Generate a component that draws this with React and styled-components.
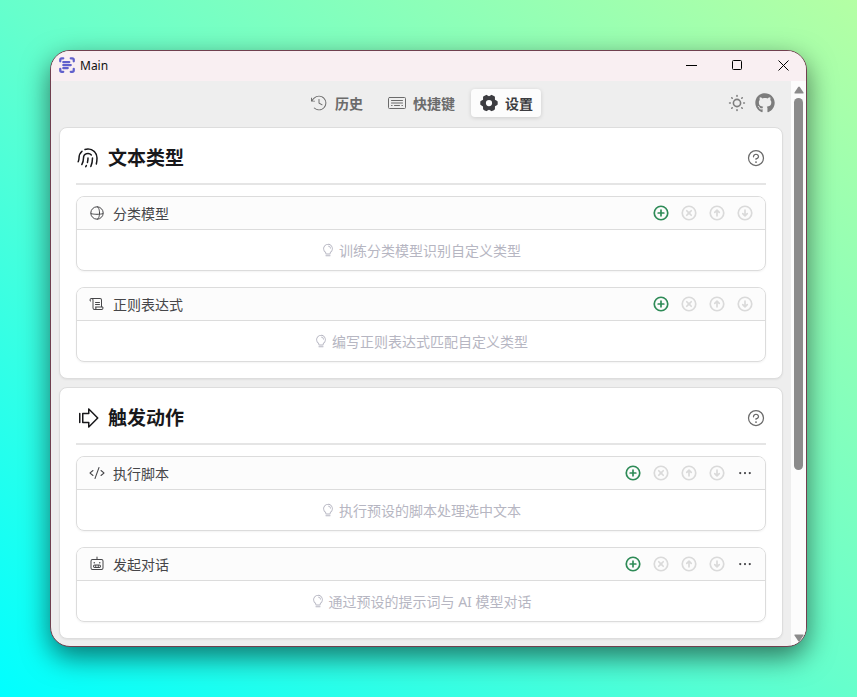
import React from "react";
import styled, { createGlobalStyle, css } from "styled-components";
import {
  PiArrowCircleDownBold,
  PiArrowCircleUpBold,
  PiArrowFatLineRight,
  PiClockCounterClockwiseLight,
  PiCode,
  PiDotsThreeBold,
  PiFingerprintSimple,
  PiGearSixFill,
  PiLightbulb,
  PiPlusCircleBold,
  PiQuestion,
  PiRobot,
  PiScroll,
  PiXCircleBold,
} from "react-icons/pi";
import { FaGithub } from "react-icons/fa";
import { LuScanText } from "react-icons/lu";

const GlobalStyle = createGlobalStyle`
  * {
    box-sizing: border-box;
  }
  body {
    margin: 0;
    font-family: "Noto Sans", "Noto Sans CJK SC", sans-serif;
    font-size: 14px;
    line-height: 21px;
    color: #18181b;
  }
  button {
    padding: 0;
    border: none;
    background: none;
    font: inherit;
    color: inherit;
    cursor: pointer;
  }
  svg {
    display: block;
    flex-shrink: 0;
  }
`;

const Desktop = styled.div`
  display: flex;
  min-height: 100vh;
  padding: 50px;
  background: linear-gradient(to top right, #00ffff, #66ffcc 50%, #b4ffa4);
`;

const Window = styled.div`
  display: flex;
  flex-direction: column;
  flex: 1;
  min-width: 0;
  overflow: hidden;
  border: 1px solid #70404f;
  border-radius: 20px;
  background: #eeeeee;
  box-shadow: 0 10px 28px rgba(0, 0, 0, 0.55);
`;

const TitleBar = styled.header`
  display: flex;
  align-items: center;
  height: 30px;
  padding: 0 0 2px 7px;
  background: #f9eff2;
`;

const AppName = styled.h1`
  flex: 1;
  margin: 0 0 0 4px;
  font-size: 12px;
  font-weight: 400;
  color: #111111;
`;

const WindowButton = styled.button`
  display: flex;
  align-items: center;
  justify-content: center;
  width: 46px;
  height: 28px;
  color: #000000;
`;

const Body = styled.div`
  display: flex;
  flex: 1;
`;

const Content = styled.main`
  flex: 1;
  min-width: 0;
  padding: 8px 8px 7px;
`;

const TopBar = styled.div`
  display: grid;
  grid-template-columns: 1fr auto 1fr;
  align-items: center;
  margin-bottom: 10px;
`;

const Tabs = styled.nav`
  display: flex;
  grid-column: 2;
  gap: 8px;
`;

const Tab = styled.button`
  display: flex;
  align-items: center;
  gap: 6px;
  height: 28px;
  padding: 0 8px;
  border-radius: 4px;
  font-weight: 600;
  color: #6b6b6b;
  ${({ $active }) =>
    $active &&
    css`
      background: #fcfcfc;
      color: #3c3c40;
      box-shadow: 0 1px 4px rgba(0, 0, 0, 0.14);
    `}
`;

const Tools = styled.div`
  display: flex;
  align-items: center;
  justify-content: flex-end;
  gap: 8px;
  padding-right: 8px;
  color: #7d7d7d;
`;

const ToolLink = styled.a`
  color: inherit;
`;

const Card = styled.section`
  padding: 16px;
  border: 1px solid #dddddd;
  border-radius: 8px;
  background: #ffffff;
  box-shadow: 0 1px 2px rgba(0, 0, 0, 0.06);

  & + & {
    margin-top: 8px;
  }
`;

const CardHeader = styled.div`
  display: flex;
  align-items: center;
  gap: 8px;
  height: 41px;
  padding-bottom: 12px;
  border-bottom: 2px solid #e5e5e5;
  margin-bottom: 11px;
`;

const CardTitle = styled.h2`
  flex: 1;
  margin: 0;
  font-size: 19px;
  line-height: 28px;
  font-weight: 600;
`;

const HelpButton = styled.button`
  color: #6b6b6b;
`;

const Panel = styled.section`
  overflow: hidden;
  border: 1px solid #dcdcdc;
  border-radius: 8px;
  box-shadow: 0 1px 2px rgba(0, 0, 0, 0.05);

  & + & {
    margin-top: 16px;
  }
`;

const PanelHeader = styled.div`
  display: flex;
  align-items: center;
  gap: 8px;
  height: 33px;
  padding: 0 8px 0 12px;
  border-bottom: 1px solid #dcdcdc;
  background: #fcfcfc;
  color: #464649;
`;

const PanelTitle = styled.h3`
  flex: 1;
  margin: 0;
  font-size: 14px;
  font-weight: 400;
`;

const Actions = styled.div`
  display: flex;
  gap: 4px;
`;

const Action = styled.button`
  display: flex;
  align-items: center;
  justify-content: center;
  width: 24px;
  height: 24px;
  color: ${({ $color }) => $color || "#464649"};

  &:disabled {
    color: #dadada;
    cursor: default;
  }
`;

const Hint = styled.p`
  display: flex;
  align-items: center;
  justify-content: center;
  gap: 4px;
  height: 40px;
  margin: 0;
  color: #b6b6c2;
`;

const ScrollBar = styled.div`
  display: flex;
  flex-direction: column;
  align-items: center;
  gap: 4px;
  width: 15px;
  padding: 5px 0 4px;
  background: #fcfcfc;
  color: #8b8b8b;
`;

const ScrollTrack = styled.div`
  flex: 1;
  width: 9px;
`;

const ScrollThumb = styled.div`
  height: 70%;
  border-radius: 5px;
  background: #8b8b8b;
`;

const SphereIcon = ({ size }) => (
  <svg width={size} height={size} viewBox="0 0 16 16" fill="none" stroke="currentColor">
    <circle cx="8" cy="8" r="6.2" />
    <path d="M1.8 8c0 .8 2.8 1.3 6.2 1.3s6.2-.5 6.2-1.3" />
    <path d="M8 1.8c1.5 0 2.5 2.8 2.5 6.2s-1 6.2-2.5 6.2" />
  </svg>
);

const KeyboardIcon = ({ size }) => (
  <svg
    width={size}
    height={size}
    viewBox="0 0 20 20"
    fill="none"
    stroke="currentColor"
    strokeLinecap="round"
  >
    <rect x="1.5" y="4.5" width="17" height="11" rx="1" />
    <path d="M4.5 7.5h11M4.5 10h11M4.5 12.5h.6M7.5 12.5h5M14.9 12.5h.6" />
  </svg>
);

const SunIcon = ({ size }) => (
  <svg
    width={size}
    height={size}
    viewBox="0 0 20 20"
    fill="none"
    stroke="currentColor"
    strokeWidth="1.6"
    strokeLinecap="round"
  >
    <circle cx="10" cy="10" r="3.6" />
    <path d="M10 2.6v.7M10 16.7v.7M2.6 10h.7M16.7 10h.7M4.8 4.8l.4.4M14.8 14.8l.4.4M15.2 4.8l-.4.4M5.2 14.8l-.4.4" />
  </svg>
);

const ScrollArrow = ({ down }) => (
  <svg width="10" height="8" viewBox="0 0 10 8" fill="currentColor">
    <path
      d={
        down
          ? "M1 .5h8q1 0 .5 1L5.8 7q-.8 1-1.6 0L.5 1.5Q0 .5 1 .5z"
          : "M1 7.5h8q1 0 .5-1L5.8 1q-.8-1-1.6 0L.5 6.5Q0 7.5 1 7.5z"
      }
    />
  </svg>
);

const tabs = [
  { label: "历史", icon: PiClockCounterClockwiseLight },
  { label: "快捷键", icon: KeyboardIcon },
  { label: "设置", icon: PiGearSixFill, active: true },
];

const cards = [
  {
    title: "文本类型",
    icon: PiFingerprintSimple,
    panels: [
      { title: "分类模型", icon: SphereIcon, hint: "训练分类模型识别自定义类型" },
      { title: "正则表达式", icon: PiScroll, hint: "编写正则表达式匹配自定义类型" },
    ],
  },
  {
    title: "触发动作",
    icon: PiArrowFatLineRight,
    panels: [
      { title: "执行脚本", icon: PiCode, hint: "执行预设的脚本处理选中文本", more: true },
      { title: "发起对话", icon: PiRobot, hint: "通过预设的提示词与 AI 模型对话", more: true },
    ],
  },
];

const ListPanel = ({ title, icon: Icon, hint, more }) => (
  <Panel>
    <PanelHeader>
      <Icon size={16} />
      <PanelTitle>{title}</PanelTitle>
      <Actions>
        <Action $color="#2e8b57" aria-label="新增">
          <PiPlusCircleBold size={18} />
        </Action>
        <Action disabled aria-label="删除">
          <PiXCircleBold size={18} />
        </Action>
        <Action disabled aria-label="上移">
          <PiArrowCircleUpBold size={18} />
        </Action>
        <Action disabled aria-label="下移">
          <PiArrowCircleDownBold size={18} />
        </Action>
        {more && (
          <Action aria-label="更多">
            <PiDotsThreeBold size={18} />
          </Action>
        )}
      </Actions>
    </PanelHeader>
    <Hint>
      <PiLightbulb size={14} />
      {hint}
    </Hint>
  </Panel>
);

const App = () => (
  <>
    <GlobalStyle />
    <Desktop>
      <Window>
        <TitleBar>
          <LuScanText size={18} color="#6060cc" strokeWidth={3} />
          <AppName>Main</AppName>
          <WindowButton aria-label="最小化">
            <svg width="11" height="11" stroke="currentColor">
              <path d="M0 5.5h11" />
            </svg>
          </WindowButton>
          <WindowButton aria-label="最大化">
            <svg width="11" height="11" stroke="currentColor" fill="none">
              <rect x=".5" y=".5" width="9" height="9" rx="1" />
            </svg>
          </WindowButton>
          <WindowButton aria-label="关闭">
            <svg width="11" height="11" stroke="currentColor">
              <path d="M.5.5l10 10M10.5.5l-10 10" />
            </svg>
          </WindowButton>
        </TitleBar>
        <Body>
          <Content>
            <TopBar>
              <Tabs>
                {tabs.map(({ label, icon: Icon, active }) => (
                  <Tab key={label} $active={active}>
                    <Icon size={20} />
                    {label}
                  </Tab>
                ))}
              </Tabs>
              <Tools>
                <button aria-label="主题">
                  <SunIcon size={20} />
                </button>
                <ToolLink href="#" aria-label="GitHub">
                  <FaGithub size={20} />
                </ToolLink>
              </Tools>
            </TopBar>
            {cards.map(({ title, icon: Icon, panels }) => (
              <Card key={title}>
                <CardHeader>
                  <Icon size={24} />
                  <CardTitle>{title}</CardTitle>
                  <HelpButton aria-label="帮助">
                    <PiQuestion size={20} />
                  </HelpButton>
                </CardHeader>
                {panels.map((panel) => (
                  <ListPanel key={panel.title} {...panel} />
                ))}
              </Card>
            ))}
          </Content>
          <ScrollBar>
            <ScrollArrow />
            <ScrollTrack>
              <ScrollThumb />
            </ScrollTrack>
            <ScrollArrow down />
          </ScrollBar>
        </Body>
      </Window>
    </Desktop>
  </>
);

export default App;
